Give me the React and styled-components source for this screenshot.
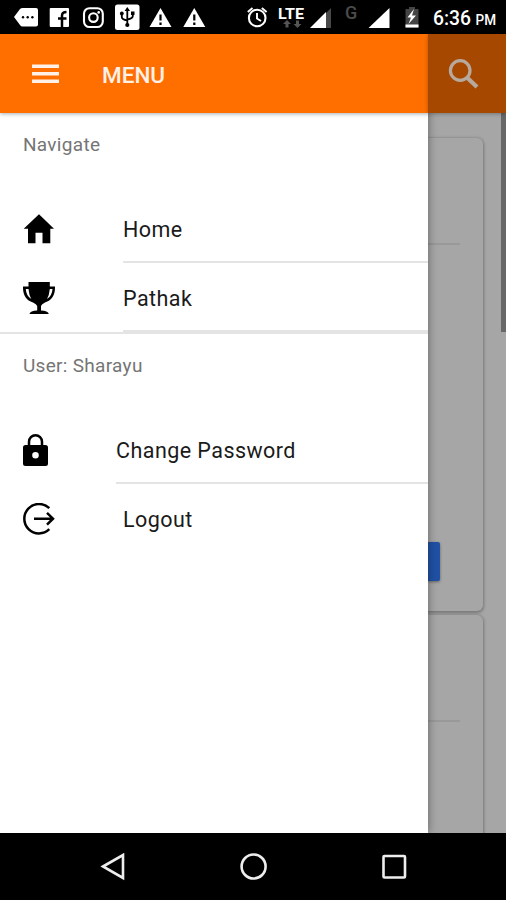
import styled, { createGlobalStyle } from "styled-components"

export default function App() {
	return (
		<Screen>
			<GlobalStyle />
			<StatusBar />
			<Content>
				<SideMenu />
				<PageBehind />
			</Content>
			<SystemNav />
		</Screen>
	)
}

function StatusBar() {
	return (
		<StatusContainer>
			<svg width="506" height="34" viewBox="0 0 506 34" fill="#fff">
				<path d="M14 17 20 9Q21 8 22.500 8H36Q38 8 38 10V24.500Q38 26.500 36 26.500H22.500Q21 26.500 20 25Z" />
				<g fill="#000">
					<circle cx="23" cy="17.300" r="1.200" />
					<circle cx="27.700" cy="17.300" r="1.200" />
					<circle cx="32.400" cy="17.300" r="1.200" />
				</g>
				<rect x="49.700" y="8" width="19.300" height="19" rx="1" />
				<path
					d="M62 27V15.500Q62 12 66.500 12M58 18.500H66.500"
					fill="none"
					stroke="#000"
					strokeWidth="2.500"
				/>
				<g fill="none" stroke="#fff" strokeWidth="2.100">
					<rect x="84" y="8.200" width="18.800" height="18.800" rx="5.500" />
					<circle cx="93.400" cy="17.600" r="4.300" />
				</g>
				<circle cx="98.700" cy="12.400" r="1.300" />
				<rect x="115" y="4.500" width="24.500" height="25.500" rx="2.500" />
				<g stroke="#000" strokeWidth="1.800" fill="none">
					<path d="M127.300 9V24M121.800 14V17Q121.800 19.500 127.300 20.500M132.800 13V16Q132.800 18.500 127.300 19.500" />
				</g>
				<path d="M127.300 7 130 11H124.600ZM131 11.500H134.500V15H131Z" fill="#000" />
				<circle cx="121.800" cy="13.500" r="1.900" fill="#000" />
				<circle cx="127.300" cy="25" r="2.100" fill="#000" />
				<Warning x={149.5} />
				<Warning x={183.3} />
				<g fill="none" stroke="#fff">
					<circle cx="257.200" cy="18" r="8.300" strokeWidth="2.100" />
					<path d="M257 13V18.500L261 21M247.800 12 252.500 8M261.800 8 266.600 12" strokeWidth="1.900" />
				</g>
				<StatusText x="278" y="18.500" $size={15.5} textLength="26" lengthAdjust="spacingAndGlyphs">
					LTE
				</StatusText>
				<g fill="#555">
					<path d="M287 20 291 24H288.500V27.500H285.500V24H283ZM297.500 28 293.500 24H296V20.500H299V24H301.500Z" />
				</g>
				<path d="M331 8V28H325V14Z" fill="#484848" />
				<path d="M310 28 326 12V28Z" />
				<StatusText x="345" y="19" $size={18} $weight={500} $color="#4b4b4b">
					G
				</StatusText>
				<path d="M368.500 28 389.500 8V28Z" />
				<path d="M405.500 9H409V7H415V9H418.500V27.500H405.500Z" fill="#444" />
				<path d="M414 9 407.500 17.500H411L408.500 24 416 15.500H412ZM405.500 24.500H418.500V27.500H405.500Z" />
				<StatusText x="433" y="25" $size={19.5} $weight={500} textLength="38" lengthAdjust="spacingAndGlyphs">
					6:36
				</StatusText>
				<StatusText x="475.500" y="25" $size={14.5} $weight={500} textLength="20.500" lengthAdjust="spacingAndGlyphs">
					PM
				</StatusText>
			</svg>
		</StatusContainer>
	)
}

function Warning({ x }) {
	return (
		<g transform={`translate(${x} 8)`}>
			<path d="M11 0 22 19H0Z" />
			<path d="M11 6.500V12.500M11 14.500V17" stroke="#000" strokeWidth="2.200" />
		</g>
	)
}

function SideMenu() {
	return (
		<Drawer>
			<MenuHeader>
				<svg width="27" height="19" viewBox="0 0 27 19">
					<path d="M0 2.200H27M0 9.700H27M0 17.200H27" stroke="#fff1e8" strokeWidth="3.600" />
				</svg>
				<MenuTitle>MENU</MenuTitle>
			</MenuHeader>
			<Section $divided>
				<SectionTitle>Navigate</SectionTitle>
				<Item>
					<HomeIcon />
					<ItemLabel $lined>Home</ItemLabel>
				</Item>
				<Item>
					<TrophyIcon />
					<ItemLabel $lined>Pathak</ItemLabel>
				</Item>
			</Section>
			<Section>
				<SectionTitle>User: Sharayu</SectionTitle>
				<Item>
					<LockIcon />
					<ItemLabel $lined>Change Password</ItemLabel>
				</Item>
				<Item>
					<LogoutIcon />
					<ItemLabel>Logout</ItemLabel>
				</Item>
			</Section>
		</Drawer>
	)
}

function HomeIcon() {
	return (
		<svg width="32" height="32" viewBox="0 0 32 32">
			<path d="M16 1.200 31 15.700H27.300V30.300H19.500V19.700H12.500V30.300H5V15.700H.7Z" />
		</svg>
	)
}

function TrophyIcon() {
	return (
		<svg width="32" height="32" viewBox="0 0 32 32">
			<path
				fillRule="evenodd"
				d="M5.500 0H26.800V4.500H32V6C32 13 28.500 18.500 22 20.500Q18.500 22 18 24V28.500Q25 28.500 25.800 32H6.500Q7.200 28.500 14.200 28.500V24Q13.500 22 10 20.500C3.500 18.500 0 13 0 6V4.500H5.500ZM5.500 7H2.800Q3.200 14 8.300 17Q6 13 5.500 7ZM26.800 7Q26.300 13 24 17Q29 14 29.500 7Z"
			/>
		</svg>
	)
}

function LockIcon() {
	return (
		<svg width="25" height="32" viewBox="0 0 25 32">
			<path d="M6 12V7.800A6.500 6.500 0 0 1 19 7.800V12" fill="none" stroke="#000" strokeWidth="2.500" />
			<path
				fillRule="evenodd"
				d="M2.500 11H22.500Q25 11 25 13.500V29.500Q25 32 22.500 32H2.500Q0 32 0 29.500V13.500Q0 11 2.500 11ZM12.500 18A3.300 3.300 0 1 0 12.500 24.600A3.300 3.300 0 1 0 12.500 18Z"
			/>
		</svg>
	)
}

function LogoutIcon() {
	return (
		<svg width="32" height="32" viewBox="0 0 32 32" fill="none" stroke="#000" strokeWidth="2.500">
			<path d="M26.300 5.200A14.700 14.700 0 1 0 26.300 26.200M11 15.700H30M24 9.800 30 15.700 24 21.600" />
		</svg>
	)
}

function PageBehind() {
	return (
		<Page>
			<PageHeader>
				<svg width="32" height="32" viewBox="0 0 32 32" fill="none" stroke="#b8a99f">
					<circle cx="12.200" cy="11.500" r="9.800" strokeWidth="3.200" />
					<path d="M19 18.500 29 28" strokeWidth="4.200" />
				</svg>
			</PageHeader>
			<PageBody>
				<Cards>
					<Card $height={473}>
						<CardHeading />
						<CardButton />
					</Card>
					<Card $height={300}>
						<CardHeading />
					</Card>
				</Cards>
				<ScrollThumb />
			</PageBody>
		</Page>
	)
}

function SystemNav() {
	return (
		<NavContainer>
			<svg width="28" height="28" viewBox="0 0 28 28">
				<path d="M4 13.500 24 2V25Z" />
			</svg>
			<svg width="28" height="28" viewBox="0 0 28 28">
				<circle cx="13.600" cy="13.500" r="12" />
			</svg>
			<svg width="28" height="28" viewBox="0 0 28 28">
				<rect x="3.500" y="3" width="21.500" height="21.500" rx="1" />
			</svg>
		</NavContainer>
	)
}

const GlobalStyle = createGlobalStyle`
	* {
		box-sizing: border-box;
	}

	body {
		margin: 0;
		font-family: Roboto, sans-serif;
	}

	svg {
		display: block;
		flex-shrink: 0;
	}
`

const Screen = styled.div`
	display: flex;
	flex-direction: column;
	width: 506px;
	height: 900px;
	overflow: hidden;
	background-color: #000;
`

const StatusContainer = styled.header`
	height: 34px;
`

const StatusText = styled.text`
	font-family: Roboto, sans-serif;
	font-size: ${(props) => props.$size}px;
	font-weight: ${(props) => props.$weight || 700};
	fill: ${(props) => props.$color || "#fff"};
`

const Content = styled.main`
	display: flex;
	height: 799px;
	overflow: hidden;
`

const Drawer = styled.aside`
	z-index: 1;
	width: 428px;
	flex-shrink: 0;
	background-color: #fff;
	box-shadow: 0 0 9px rgba(0, 0, 0, 0.4);
`

const MenuHeader = styled.div`
	display: flex;
	align-items: center;
	height: 79px;
	padding-left: 32px;
	gap: 43px;
	background-color: #ff6f00;
	box-shadow: 0 1px 4px rgba(0, 30, 40, 0.35);
`

const MenuTitle = styled.h1`
	margin: 2px 0 0;
	color: #fff1e8;
	font-size: 22.500px;
	font-weight: 500;
`

const Section = styled.section`
	padding-top: 1px;
	border-bottom: ${(props) => (props.$divided ? "2px solid #e4e4e4" : "none")};
`

const SectionTitle = styled.h2`
	height: 80px;
	margin: 0;
	padding: 19px 23px 0;
	color: #757575;
	font-size: 19px;
	font-weight: 400;
	line-height: 24px;
	letter-spacing: 0.3px;
`

const Item = styled.div`
	display: flex;
	align-items: center;
	height: 69px;
	padding-left: 23px;
	gap: 68px;
`

const ItemLabel = styled.span`
	flex: 1;
	height: 69px;
	border-bottom: ${(props) => (props.$lined ? "2px solid #e4e4e4" : "none")};
	color: #1a1a1a;
	font-size: 21.500px;
	line-height: 71px;
	letter-spacing: 0.450px;
`

const Page = styled.div`
	flex: 1;
	display: flex;
	flex-direction: column;
	background-color: #a6a6a6;
`

const PageHeader = styled.div`
	z-index: 1;
	height: 79px;
	padding: 25px 0 0 20px;
	background-color: #a64800;
	box-shadow: 0 1px 4px rgba(0, 0, 0, 0.3);
`

const PageBody = styled.div`
	flex: 1;
	display: flex;
	justify-content: space-between;
	min-height: 0;
`

const Cards = styled.div`
	display: flex;
	flex-direction: column;
	gap: 4px;
	width: 55px;
	padding-top: 25px;
`

const Card = styled.article`
	flex-shrink: 0;
	height: ${(props) => props.$height}px;
	border-radius: 0 6px 6px 0;
	background-color: #a6a6a6;
	box-shadow: 0 1px 3px 1px rgba(0, 0, 0, 0.28);
`

const CardHeading = styled.div`
	width: 32px;
	height: 107px;
	border-bottom: 2px solid #999;
`

const CardButton = styled.div`
	width: 12px;
	height: 39px;
	margin-top: 297px;
	border-radius: 0 2px 2px 0;
	background-color: #2051a5;
	box-shadow: 0 1px 3px rgba(0, 0, 0, 0.4);
`

const ScrollThumb = styled.div`
	width: 5px;
	height: 219px;
	background-color: #686868;
`

const NavContainer = styled.nav`
	display: flex;
	justify-content: space-between;
	align-items: center;
	height: 67px;
	padding: 0 98px 0 99px;

	svg {
		fill: none;
		stroke: #eee;
		stroke-width: 2.600;
	}
`
